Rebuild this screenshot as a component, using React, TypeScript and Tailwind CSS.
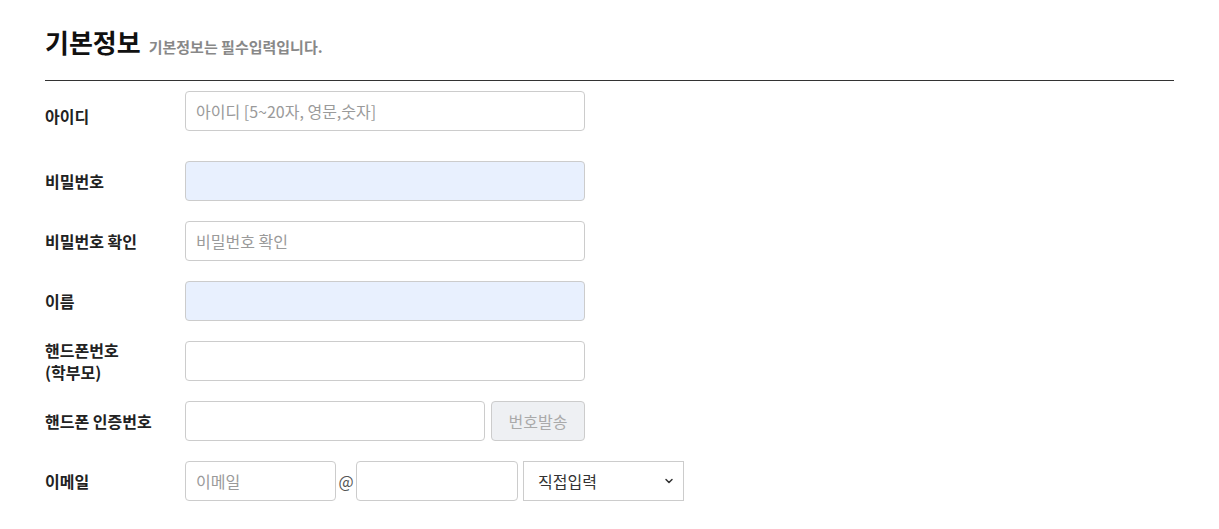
import { ChevronDown } from "lucide-react";

const font = { fontFamily: '"Noto Sans CJK KR", "Noto Sans", sans-serif' };

const inputCls =
  "h-10 rounded-[4px] border border-[#cccccc] px-[10px] text-[16px] text-[#333] placeholder:text-[#9a9a9a] outline-none";

const Label = ({ children }: { children: React.ReactNode }) => (
  <div className="w-[140px] shrink-0 text-[16px] font-bold leading-[22px] text-[#222]">{children}</div>
);

export default function App() {
  return (
    <div className="min-h-screen bg-white px-[45px]" style={font}>
      <div className="w-[1129px]">
        {/* heading */}
        <div className="flex items-baseline gap-2 pt-[24px] pb-[20px]">
          <h2 className="text-[26px] font-bold leading-[36px] text-[#111]">기본정보</h2>
          <span className="text-[15px] font-bold text-[#888]">기본정보는 필수입력입니다.</span>
        </div>
        <div className="h-px bg-[#333]" />

        <div className="flex flex-col gap-5 pt-[10px]">
          <div className="flex h-[50px] items-center">
            <Label>아이디</Label>
            <input className={`${inputCls} w-[400px] self-start bg-white`} placeholder="아이디 [5~20자, 영문,숫자]" />
          </div>

          <div className="flex h-10 items-center">
            <Label>비밀번호</Label>
            <input type="password" className={`${inputCls} w-[400px] bg-[#e8f0fe]`} />
          </div>

          <div className="flex h-10 items-center">
            <Label>비밀번호 확인</Label>
            <input type="password" className={`${inputCls} w-[400px] bg-white`} placeholder="비밀번호 확인" />
          </div>

          <div className="flex h-10 items-center">
            <Label>이름</Label>
            <input className={`${inputCls} w-[400px] bg-[#e8f0fe]`} />
          </div>

          <div className="flex h-10 items-center">
            <Label>
              핸드폰번호
              <br />
              (학부모)
            </Label>
            <input className={`${inputCls} w-[400px] bg-white`} />
          </div>

          <div className="flex h-10 items-center">
            <Label>핸드폰 인증번호</Label>
            <input className={`${inputCls} w-[300px] bg-white`} />
            <button className="ml-[6px] h-10 w-[94px] rounded-[4px] border border-[#cccccc] bg-[#eef0f3] text-[16px] text-[#aaa]">
              번호발송
            </button>
          </div>

          <div className="flex h-10 items-center">
            <Label>이메일</Label>
            <input className={`${inputCls} w-[151px] bg-white`} placeholder="이메일" />
            <span className="w-5 text-center text-[16px] text-[#555]">@</span>
            <input className={`${inputCls} w-[162px] bg-white`} />
            <div className="relative ml-[5px] w-[161px]">
              <select className="h-10 w-full appearance-none rounded-none border border-[#cccccc] bg-white pl-[14px] text-[16px] text-[#333] outline-none">
                <option>직접입력</option>
              </select>
              <ChevronDown className="pointer-events-none absolute right-[9px] top-1/2 h-3 w-3 -translate-y-1/2 text-[#333]" strokeWidth={3} />
            </div>
          </div>
        </div>
      </div>
    </div>
  );
}
